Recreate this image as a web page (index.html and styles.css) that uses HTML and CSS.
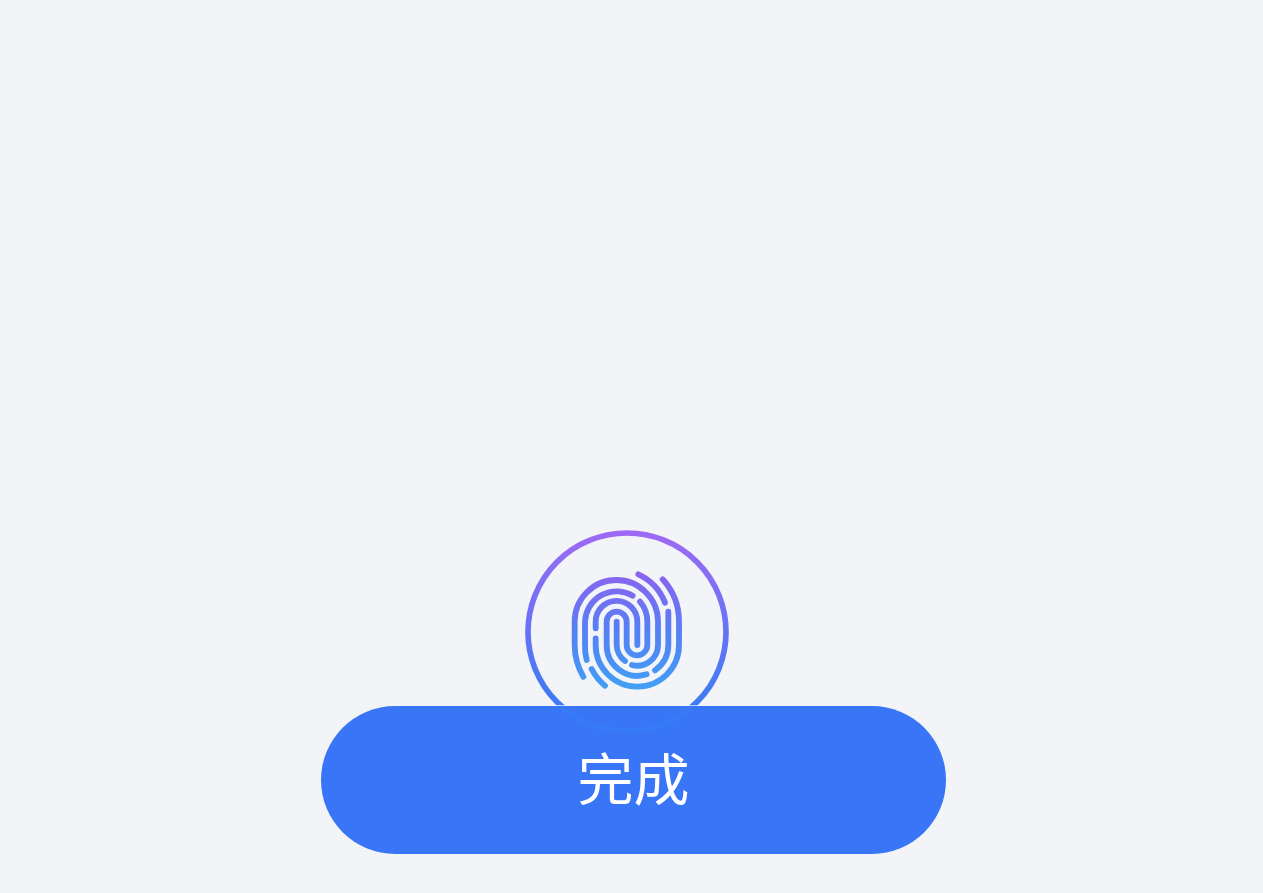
FILE: index.html
```html
<!DOCTYPE html>
<html lang="zh-CN">
<head>
    <meta charset="UTF-8">
    <meta name="viewport" content="width=device-width, initial-scale=1.0">
    <title>完成</title>
    <link rel="stylesheet" href="styles.css">
</head>
<body>
    <div class="finish-container">
        <svg class="finger-icon" viewBox="-105 -105 612 612" fill="none" stroke-linecap="round">
            <defs>
                <linearGradient id="ringColor" gradientUnits="userSpaceOnUse" x1="0" y1="-105" x2="0" y2="507">
                    <stop offset="0" stop-color="#a069f5"/>
                    <stop offset="0.5" stop-color="#6474f5"/>
                    <stop offset="0.86" stop-color="#3d7bf4"/>
                    <stop offset="0.86" stop-color="#3286f5" stop-opacity="0.3"/>
                    <stop offset="1" stop-color="#3286f5" stop-opacity="0.25"/>
                </linearGradient>
                <linearGradient id="printColor" gradientUnits="userSpaceOnUse" x1="0" y1="28" x2="0" y2="366">
                    <stop offset="0" stop-color="#8a64f0"/>
                    <stop offset="0.5" stop-color="#5580f5"/>
                    <stop offset="1" stop-color="#429ef5"/>
                </linearGradient>
            </defs>
            <circle cx="201" cy="201" r="297" stroke="url(#ringColor)" stroke-width="17"/>
            <g stroke="url(#printColor)" stroke-width="17.5">
                <path d="M70 335A188 188 0 0 1 44 240V170A125 125 0 0 1 294 170V240A62 62 0 0 1 216 300"/>
                <path d="M80 285A157 157 0 0 1 75 240V170A95 95 0 0 1 218 92"/>
                <path d="M107 190V170A62.5 62.5 0 0 1 232 170V240"/>
                <path d="M170 170V240A62 62 0 0 0 195 288"/>
                <path d="M240 110A92 92 0 0 1 262 170V240A31 31 0 0 1 200 240V170A30 30 0 0 0 140 170V240A92 92 0 0 0 260 328"/>
                <path d="M107 220V240A125 125 0 0 0 357 240V170A187 187 0 0 0 308 43"/>
                <path d="M325 140V240A93 93 0 0 1 285 316"/>
                <path d="M235 28A156 156 0 0 1 315 113"/>
                <path d="M95 312A155 155 0 0 0 135 362"/>
            </g>
        </svg>
        <button class="finish-btn" type="button">完成</button>
    </div>
</body>
</html>
```

FILE: styles.css
```css
html, body {
    height: 100%;
}
body {
    font-family: "Liberation Sans", "Noto Sans CJK SC", sans-serif;
    background-color: #f2f4f7;
    margin: 0;
    padding: 0;
    overflow: hidden;
}
.finish-container {
    width: 625px;
    margin-left: 321px;
    padding-top: 530px;
    display: flex;
    flex-direction: column;
}
.finger-icon {
    display: block;
    position: relative;
    z-index: 1;
    width: 204px;
    height: 204px;
    margin-left: 204px;
    margin-bottom: -28px;
}
.finish-btn {
    height: 148px;
    border: none;
    border-radius: 74px;
    background-color: #3976f7;
    color: #fff;
    font-family: "Noto Sans CJK SC", sans-serif;
    font-size: 56px;
    font-weight: 400;
    cursor: pointer;
    padding: 0 0 9px;
}
```
